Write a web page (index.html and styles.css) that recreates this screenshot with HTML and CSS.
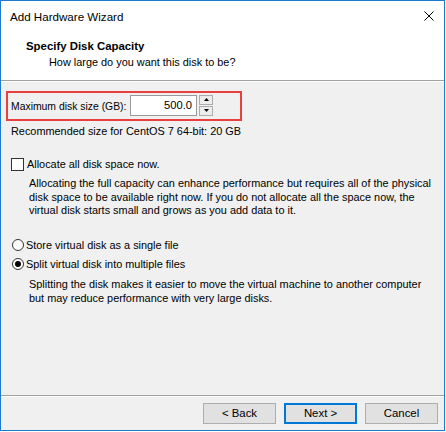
FILE: index.html
```html
<!DOCTYPE html>
<html>
<head>
<meta charset="utf-8">
<link rel="stylesheet" href="styles.css">
</head>
<body>
<div class="window">
  <div class="titlebar">
    <span class="title">Add Hardware Wizard</span>
    <svg class="close" width="10" height="10" viewBox="0 0 10 10"><path d="M0.5 0.5 L9.5 9.5 M9.5 0.5 L0.5 9.5" stroke="#000" stroke-width="1" fill="none"/></svg>
  </div>
  <div class="header">
    <div class="h-title">Specify Disk Capacity</div>
    <div class="h-sub">How large do you want this disk to be?</div>
  </div>
  <div class="content">
    <div class="size-row">
      <span class="size-label">Maximum disk size (GB):</span>
      <div class="num-input">500.0</div>
      <div class="spinner">
        <div class="spin-btn"><svg width="5" height="3" viewBox="0 0 5 3"><path d="M2.5 0 L5 3 L0 3 Z" fill="#000"/></svg></div>
        <div class="spin-btn"><svg width="5" height="3" viewBox="0 0 5 3"><path d="M0 0 L5 0 L2.5 3 Z" fill="#000"/></svg></div>
      </div>
    </div>
    <div class="rec">Recommended size for CentOS 7 64-bit: 20 GB</div>
    <div class="option check-row"><span class="box"></span><span>Allocate all disk space now.</span></div>
    <p class="desc desc-a">Allocating the full capacity can enhance performance but requires all of the physical disk space to be available right now. If you do not allocate all the space now, the virtual disk starts small and grows as you add data to it.</p>
    <div class="option radio-row first"><span class="circle"></span><span>Store virtual disk as a single file</span></div>
    <div class="option radio-row second"><span class="circle checked"></span><span>Split virtual disk into multiple files</span></div>
    <p class="desc desc-b">Splitting the disk makes it easier to move the virtual machine to another computer but may reduce performance with very large disks.</p>
  </div>
  <div class="footer">
    <div class="btn">&lt; Back</div>
    <div class="btn btn-default">Next &gt;</div>
    <div class="btn">Cancel</div>
  </div>
</div>
</body>
</html>
```

FILE: styles.css
```css
html, body {
  margin: 0;
  padding: 0;
  background: #ffffff;
}
body {
  font-family: "Liberation Sans", Arial, sans-serif;
  font-size: 10.9px;
  color: #000;
}
.window {
  box-sizing: border-box;
  width: 445px;
  height: 431px;
  border: 1px solid #1c7bd0;
  background: #f0f0f0;
  display: flex;
  flex-direction: column;
}
.titlebar {
  height: 30px;
  background: #fff;
  display: flex;
  align-items: center;
  justify-content: space-between;
  padding: 0 10px 0 9px;
}
.title {
  font-size: 11.6px;
  line-height: 30px;
  padding-top: 1px;
}
.close {
  display: block;
}
.header {
  height: 50px;
  box-sizing: border-box;
  background: #fff;
  padding: 8px 0 0 25px;
  border-bottom: 1px solid #a0a0a0;
}
.h-title {
  font-weight: bold;
  font-size: 11.4px;
  line-height: 14px;
}
.h-sub {
  margin-top: 2px;
  padding-left: 23px;
  line-height: 14px;
}
.content {
  flex: 1;
  border-top: 1px solid #fff;
  display: flex;
  flex-direction: column;
  align-items: flex-start;
}
.size-row {
  box-sizing: border-box;
  margin: 9px 0 0 5px;
  width: 236px;
  height: 30px;
  border: 2px solid #e8403f;
  display: flex;
  align-items: center;
  padding-left: 3px;
}
.size-label {
  line-height: 14px;
  margin-top: 1px;
  width: 119px;
  flex-shrink: 0;
  white-space: nowrap;
  font-size: 10.4px;
}
.num-input {
  box-sizing: border-box;
  flex-shrink: 0;
  width: 67px;
  height: 21px;
  margin-top: -2px;
  background: #fff;
  border: 1px solid #9a9a9a;
  text-align: right;
  padding-right: 4px;
  line-height: 19px;
  font-size: 11.2px;
}
.spinner {
  flex-shrink: 0;
  margin-left: 2px;
  margin-top: -2px;
  display: flex;
  flex-direction: column;
  gap: 1px;
}
.spin-btn {
  box-sizing: border-box;
  width: 14px;
  height: 10px;
  background: #ededed;
  border: 1px solid #acacac;
  display: flex;
  align-items: center;
  justify-content: center;
}
.spin-btn svg {
  display: block;
}
.rec {
  margin: 3px 0 0 10px;
  line-height: 14px;
  white-space: nowrap;
}
.option {
  display: flex;
  align-items: center;
  line-height: 14px;
  white-space: nowrap;
}
.check-row {
  margin: 19px 0 0 10px;
}
.box {
  box-sizing: border-box;
  width: 13px;
  height: 13px;
  background: #fff;
  border: 1px solid #333;
  margin-right: 3px;
}
.desc {
  margin: 6px 0 0 28px;
  line-height: 13.5px;
  width: 404px;
}
.desc-b {
  line-height: 14px;
}
.radio-row.first {
  margin: 20px 0 0 11px;
}
.radio-row.second {
  margin: 5px 0 0 11px;
}
.circle {
  box-sizing: border-box;
  width: 12px;
  height: 12px;
  border-radius: 50%;
  border: 1px solid #333;
  background: #fff;
  margin-right: 2px;
  display: flex;
  align-items: center;
  justify-content: center;
}
.circle.checked::after {
  content: "";
  width: 6px;
  height: 6px;
  border-radius: 50%;
  background: #000;
}
.footer {
  height: 35px;
  box-sizing: border-box;
  border-top: 1px solid #a0a0a0;
  box-shadow: inset 0 1px #fff;
  display: flex;
  justify-content: flex-end;
  align-items: flex-start;
  gap: 8px;
  padding: 7px 6px 0 0;
}
.btn {
  box-sizing: border-box;
  width: 73px;
  height: 21px;
  background: #e1e1e1;
  border: 1px solid #adadad;
  text-align: center;
  line-height: 19px;
  font-size: 11.4px;
}
.btn-default {
  border: 2px solid #0078d7;
  line-height: 17px;
}
```
